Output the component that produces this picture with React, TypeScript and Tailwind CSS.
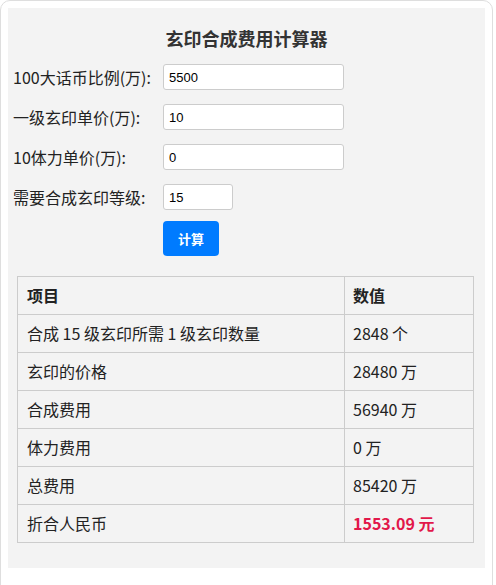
import { JSX, useState } from "react";

const font = "font-['Microsoft_YaHei','Noto_Sans_CJK_SC',sans-serif]";

export default function App(): JSX.Element {
    const [ratio, setRatio] = useState("5500");
    const [unit, setUnit] = useState("10");
    const [stamina, setStamina] = useState("0");
    const [level, setLevel] = useState("15");

    const rows: [string, string, boolean?][] = [
        ["合成 15 级玄印所需 1 级玄印数量", "2848 个"],
        ["玄印的价格", "28480 万"],
        ["合成费用", "56940 万"],
        ["体力费用", "0 万"],
        ["总费用", "85420 万"],
        ["折合人民币", "1553.09 元", true],
    ];

    return (
        <div className={`${font} w-[493px] min-h-[600px] bg-white border border-[#dedede] rounded-[10px] p-[7px] text-[#222]`}>
            <div className="bg-[#f3f3f3] h-[560px] pt-[18px] pl-[5px]">
                <h2 className="text-center text-[18px] leading-[24px] font-bold text-[#333] pr-[5px]">玄印合成费用计算器</h2>
                <div className="mt-[14px] flex flex-col gap-[14px]">
                    <Field label="100大话币比例(万):" value={ratio} onChange={setRatio} width="w-[181px]" />
                    <Field label="一级玄印单价(万):" value={unit} onChange={setUnit} width="w-[181px]" />
                    <Field label="10体力单价(万):" value={stamina} onChange={setStamina} width="w-[181px]" />
                    <Field label="需要合成玄印等级:" value={level} onChange={setLevel} width="w-[70px]" />
                </div>
                <div className="pl-[150px] mt-[11px]">
                    <button className="w-[56px] h-[35px] rounded-[4px] bg-[#007bff] text-white text-[13px] font-bold">计算</button>
                </div>
                <table className="mt-[20px] ml-[4px] w-[457px] border-collapse text-[16px]">
                    <thead>
                        <tr>
                            <th className="w-[327px] border border-[#cccccc] text-left font-bold pl-[9px] py-[8px] leading-[21px]">项目</th>
                            <th className="border border-[#cccccc] text-left font-bold pl-[8px] py-[8px] leading-[21px]">数值</th>
                        </tr>
                    </thead>
                    <tbody>
                        {rows.map(([k, v, red]) => (
                            <tr key={k}>
                                <td className="border border-[#cccccc] pl-[9px] py-[8px] leading-[21px]">{k}</td>
                                <td className={`border border-[#cccccc] pl-[8px] py-[8px] leading-[21px] ${red ? "text-[#e2184a] font-bold" : ""}`}>{v}</td>
                            </tr>
                        ))}
                    </tbody>
                </table>
            </div>
        </div>
    );
}

function Field({ label, value, onChange, width }: { label: string; value: string; onChange: (v: string) => void; width: string }) {
    return (
        <div className="flex items-center h-[26px]">
            <label className="w-[150px] text-[16px] leading-[26px]">{label}</label>
            <input
                className={`${width} h-[26px] bg-white border border-[#cccccc] rounded-[3px] px-[5px] text-[13px] font-['Liberation_Sans',sans-serif] text-black outline-none`}
                value={value}
                onChange={(e) => onChange(e.target.value)}
            />
        </div>
    );
}
